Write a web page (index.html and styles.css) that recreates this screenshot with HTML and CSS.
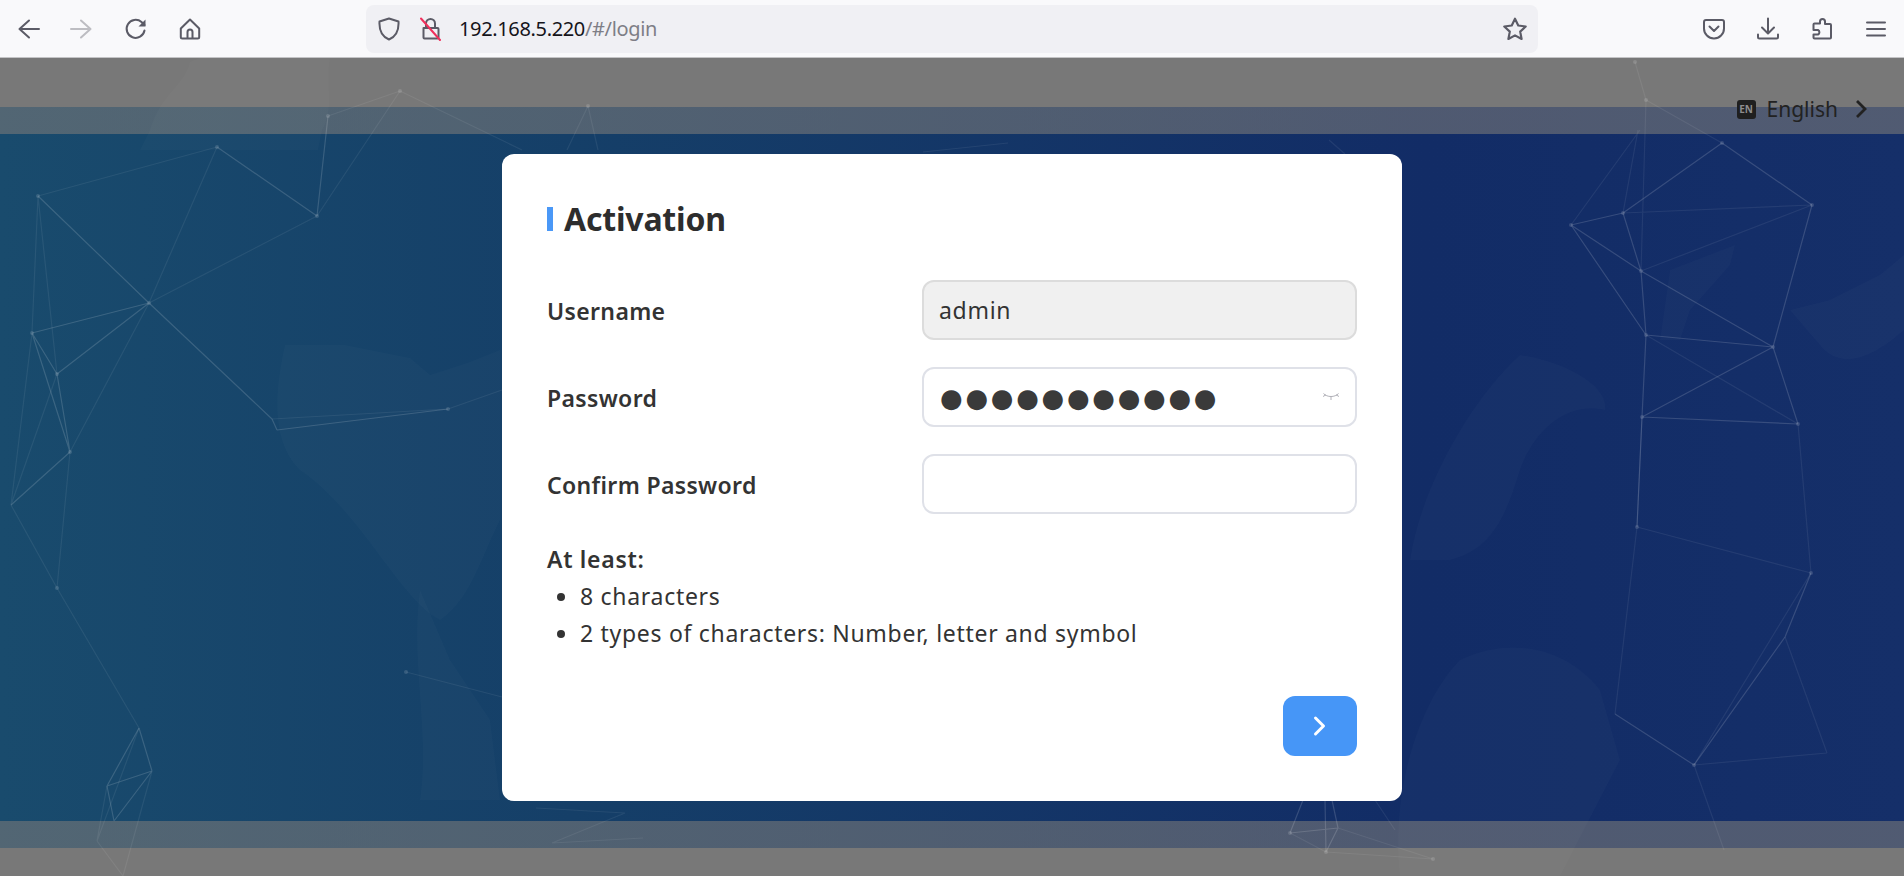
FILE: index.html
```html
<!DOCTYPE html>
<html lang="en">
  <head>
    <meta charset="UTF-8" />
    <meta name="viewport" content="width=device-width, initial-scale=1.0" />
    <title>Activation</title>
    <link rel="stylesheet" href="styles.css">
  </head>
  <body>
    <header class="toolbar">
      <div class="tool-group">
        <button class="tool-btn" aria-label="Back">
          <svg width="24" height="24" viewBox="0 0 24 24"><path d="M13 3.500 3.500 12l9.500 8.500M3.500 12H23"/></svg>
        </button>
        <button class="tool-btn tool-off" aria-label="Forward">
          <svg width="24" height="24" viewBox="0 0 24 24"><path d="M11 3.500 20.500 12 11 20.500M20.500 12H1"/></svg>
        </button>
        <button class="tool-btn" aria-label="Reload">
          <svg width="24" height="24" viewBox="0 0 24 24"><path d="M20.500 13.500A9 9 0 1 1 17.500 5L20.500 8"/><path class="fill" d="M21.500 2.500V9.500H14.500Z"/></svg>
        </button>
        <button class="tool-btn" aria-label="Home">
          <svg width="24" height="24" viewBox="0 0 24 24"><path d="M12 2.500 2.800 11.500V20a1.500 1.500 0 0 0 1.500 1.500h15.400a1.500 1.500 0 0 0 1.500-1.500v-8.500ZM9.500 21.500V15a2.500 2.500 0 0 1 5 0v6.500"/></svg>
        </button>
      </div>

      <div class="address-bar">
        <svg class="addr-icon" width="22" height="24" viewBox="0 0 22 24"><path d="M11 1.500 20.500 4.500C21 13 18 19.500 11 22.500 4 19.500 1 13 1.500 4.500Z"/></svg>
        <svg class="addr-icon lock" width="22" height="24" viewBox="0 0 22 24"><path d="M6 11V6.500a4.500 4.500 0 0 1 9 0V11M3.500 11h14a1 1 0 0 1 1 1v8.500a1 1 0 0 1-1 1h-13a1 1 0 0 1-1-1Z"/><path class="slash" d="M1 1.500 20 23"/></svg>
        <span class="url">192.168.5.220<span class="url-path">/#/login</span></span>
        <svg class="addr-icon star" width="26" height="26" viewBox="0 0 24 24"><path d="M12 2.500 15 8.800 21.900 9.700 16.800 14.400 18.100 21.200 12 17.900 5.900 21.200 7.200 14.400 2.100 9.700 9 8.800Z"/></svg>
      </div>

      <div class="tool-group tool-right">
        <button class="tool-btn" aria-label="Pocket">
          <svg width="24" height="24" viewBox="0 0 24 24"><path d="M4 3h16a2 2 0 0 1 2 2v6.500a10 10 0 0 1-20 0V5a2 2 0 0 1 2-2ZM7.500 9.500 12 14l4.500-4.500"/></svg>
        </button>
        <button class="tool-btn" aria-label="Downloads">
          <svg width="24" height="24" viewBox="0 0 24 24"><path d="M12 1.500V16M6 10.500 12 16.500 18 10.500M2 17.500V20a1.500 1.500 0 0 0 1.500 1.500h17A1.500 1.500 0 0 0 22 20v-2.500"/></svg>
        </button>
        <button class="tool-btn" aria-label="Extensions">
          <svg width="24" height="24" viewBox="0 0 24 24"><path d="M10 6.500H4.500a1 1 0 0 0-1 1V13H8a2.500 2.500 0 0 1 0 4.500H3.500v3a1 1 0 0 0 1 1H20a1 1 0 0 0 1-1V8a1 1 0 0 0-1-1h-5V4.500a2.500 2.500 0 0 0-5 0Z"/></svg>
        </button>
        <button class="tool-btn" aria-label="Menu">
          <svg width="24" height="24" viewBox="0 0 24 24"><path d="M3 5.500h18M3 12h18M3 18.500h18"/></svg>
        </button>
      </div>
    </header>

    <div class="stage">
      <!-- world map and network lines behind the card -->
      <svg class="backdrop" width="1904" height="818" viewBox="0 58 1904 818">
        <g class="map">
          <path d="M150 130C160 95 185 85 190 62L200 58H330C325 85 335 110 322 130L318 150H140Z"/>
          <path d="M285 345 345 345 410 358 430 375 470 362 500 350V520C480 560 470 600 440 620 400 600 360 510 300 470 270 440 275 390 285 345Z"/>
          <path d="M420 590 450 660 490 720 500 800H420C430 730 410 660 420 590Z"/>
          <path d="M1410 560C1420 490 1470 400 1520 355 1560 360 1610 385 1605 410 1560 400 1530 440 1520 470 1505 520 1490 550 1450 560Z"/>
          <path d="M1670 270 1735 245 1730 265 1690 310 1680 340 1660 340Z"/>
          <path d="M1790 310 1830 300 1880 275 1904 255V330C1870 360 1840 370 1820 345Z"/>
          <path d="M1460 660C1500 640 1560 640 1600 690L1620 760 1560 876H1400C1390 790 1420 700 1460 660Z"/>
        </g>
        <g class="links-faint">
          <path d="M38 196 217 147M217 147 149 303M149 303 317 216M38 196 32 333M38 196 57 374M32 333 11 505M57 374 11 505M149 303 70 452M70 452 57 588M272 419 448 409M448 409 502 390M400 91 522 150M328 116 400 91M317 216 400 91M11 505 57 588M57 588 139 728"/>
          <path d="M139 728 97 841M152 771 123 876M107 786 97 841M97 841 123 876M406 672 502 697M588 106 567 150M588 106 598 150"/>
          <path d="M1623 213 1812 205M1641 271 1812 205M1571 225 1640 130M1623 213 1638 130M1646 100 1641 271M1635 62 1646 100M1646 100 1722 143M1646 335 1798 424M1642 417 1637 527M1637 527 1811 573M1637 527 1615 714M1811 573 1694 765M1694 765 1724 850M1827 753 1694 765M1798 424 1811 573M1785 637 1827 753"/>
          <path d="M1375 800 1395 830M1290 833 1326 852M1338 828 1433 859M1326 852 1433 859M1008 143 923 152M1329 140 1345 154M536 808 625 813M625 813 552 843M552 843 643 838"/>
        </g>
        <g class="links">
          <path d="M38 196 149 303M32 333 149 303M32 333 57 374M57 374 149 303M57 374 70 452M32 333 70 452M70 452 11 505M149 303 272 419M217 147 317 216M317 216 328 116M272 419 277 430M277 430 448 409"/>
          <path d="M139 728 152 771M139 728 107 786M107 786 152 771M107 786 114 821M152 771 114 821"/>
          <path d="M1722 143 1812 205M1722 143 1623 213M1623 213 1571 225M1571 225 1641 271M1623 213 1641 271M1641 271 1646 335M1571 225 1646 335M1641 271 1773 347M1646 335 1773 347M1773 347 1812 205M1773 347 1798 424M1642 417 1773 347M1642 417 1798 424M1646 335 1642 417M1642 417 1637 527M1811 573 1785 637M1785 637 1694 765M1694 765 1615 714"/>
          <path d="M1303 800 1290 833M1325 800 1326 852M1332 800 1338 828M1290 833 1338 828M1338 828 1326 852"/>
        </g>
        <g class="nodes">
          <circle cx="38" cy="196" r="2"/><circle cx="149" cy="303" r="2"/><circle cx="32" cy="333" r="2"/><circle cx="57" cy="374" r="2"/><circle cx="70" cy="452" r="2"/><circle cx="217" cy="147" r="2"/><circle cx="317" cy="216" r="2"/><circle cx="328" cy="116" r="2"/><circle cx="400" cy="91" r="2"/><circle cx="448" cy="409" r="2"/><circle cx="588" cy="106" r="2"/><circle cx="57" cy="588" r="2"/><circle cx="406" cy="672" r="2"/><circle cx="1635" cy="62" r="2"/><circle cx="1646" cy="100" r="2"/><circle cx="1722" cy="143" r="2"/><circle cx="1812" cy="205" r="2"/><circle cx="1623" cy="213" r="2"/><circle cx="1571" cy="225" r="2"/><circle cx="1641" cy="271" r="2"/><circle cx="1646" cy="335" r="2"/><circle cx="1773" cy="347" r="2"/><circle cx="1642" cy="417" r="2"/><circle cx="1798" cy="424" r="2"/><circle cx="1637" cy="527" r="2"/><circle cx="1811" cy="573" r="2"/><circle cx="1694" cy="765" r="2"/><circle cx="1290" cy="833" r="2"/><circle cx="1326" cy="852" r="2"/><circle cx="1433" cy="859" r="2"/>
        </g>
      </svg>

      <div class="lang-row">
        <div class="lang">
          <span class="lang-badge">EN</span>
          <span>English</span>
          <svg width="12" height="20" viewBox="0 0 12 20"><path d="M2 2 10 10 2 18"/></svg>
        </div>
      </div>

      <main class="card">
        <h2 class="card-title">Activation</h2>

        <div class="form-row">
          <label for="username">Username</label>
          <div class="field">
            <input id="username" type="text" value="admin" disabled />
          </div>
        </div>
        <div class="form-row">
          <label for="password">Password</label>
          <div class="field">
            <input id="password" class="dots" type="text" value="●●●●●●●●●●●" />
            <svg class="eye" width="18" height="11" viewBox="0 0 18 11"><path d="M1.500 2.500C5 6.500 13 6.500 16.500 2.500M1 5.500 4 3.800M17 5.500 14 3.800M9 5.500V9"/></svg>
          </div>
        </div>
        <div class="form-row">
          <label for="confirm">Confirm Password</label>
          <div class="field">
            <input id="confirm" type="password" />
          </div>
        </div>

        <div class="rules">
          <p class="rules-head">At least:</p>
          <ul>
            <li>8 characters</li>
            <li>2 types of characters: Number, letter and symbol</li>
          </ul>
        </div>

        <div class="actions">
          <button class="next-btn" aria-label="Next">
            <svg width="14" height="22" viewBox="0 0 14 22"><path d="M2.500 3 10.500 11 2.500 19"/></svg>
          </button>
        </div>
      </main>
    </div>
  </body>
</html>
```

FILE: styles.css
```css
* {
  box-sizing: border-box;
  margin: 0;
  padding: 0;
}

html,
body {
  height: 100%;
  overflow: hidden;
}

body {
  font-family: "Noto Sans", "Open Sans", sans-serif;
  color: #333;
}

button {
  background: none;
  border: none;
  cursor: pointer;
}

/* browser bar */
.toolbar {
  display: flex;
  align-items: center;
  height: 58px;
  background: #f9f9fb;
  border-bottom: 1px solid #c4c4c6;
}

.tool-group {
  display: flex;
  flex-shrink: 0;
  padding-left: 1px;
}

.tool-right {
  margin-left: auto;
  padding: 0 1px 0 0;
}

.tool-btn {
  display: flex;
  align-items: center;
  justify-content: center;
  width: 54px;
  height: 54px;
}

.tool-btn svg,
.addr-icon {
  fill: none;
  stroke: #5b5b66;
  stroke-width: 2;
  stroke-linecap: round;
  stroke-linejoin: round;
  flex-shrink: 0;
}

.tool-btn .fill {
  fill: #5b5b66;
  stroke: none;
}

.tool-off svg {
  stroke: #bdbdc2;
}

.address-bar {
  display: flex;
  align-items: center;
  width: 1172px;
  height: 48px;
  margin-left: 149px;
  padding: 0 10px 0 12px;
  background: #f0f0f4;
  border-radius: 8px;
}

.lock {
  margin-left: 20px;
}

.lock .slash {
  stroke: #f0305c;
}

.url {
  margin-left: 17px;
  font-size: 20px;
  letter-spacing: -0.35px;
  color: #15141a;
}

.url-path {
  color: #7e7e86;
}

.star {
  margin-left: auto;
}

/* page background */
.stage {
  position: relative;
  height: 818px;
  background:
    linear-gradient(
      to bottom,
      #787878 0,
      #787878 49px,
      rgba(120, 120, 120, 0.6) 49px,
      rgba(120, 120, 120, 0.6) 76px,
      transparent 76px,
      transparent 763px,
      rgba(120, 120, 120, 0.6) 763px,
      rgba(120, 120, 120, 0.6) 790px,
      #787878 790px
    ),
    linear-gradient(to right, #194b6d 0%, #153f68 30%, #122c66 75%, #152f69 100%);
}

.backdrop {
  position: absolute;
  top: 0;
  left: 0;
}

.map path {
  fill: rgba(255, 255, 255, 0.018);
}

.links path,
.links-faint path {
  fill: none;
  stroke-width: 1.2;
}

.links path {
  stroke: rgba(255, 255, 255, 0.15);
}

.links-faint path {
  stroke: rgba(255, 255, 255, 0.07);
}

.nodes circle {
  fill: rgba(255, 255, 255, 0.14);
}

.lang-row {
  position: relative;
  display: flex;
  justify-content: flex-end;
  height: 96px;
  padding: 40px 37px 0 0;
}

.lang {
  display: flex;
  align-items: center;
  height: 22px;
  font-size: 21px;
  color: #222;
}

.lang svg {
  margin-left: 17px;
  fill: none;
  stroke: #222;
  stroke-width: 2.800;
}

.lang-badge {
  display: flex;
  align-items: center;
  justify-content: center;
  width: 19px;
  height: 19px;
  margin-right: 11px;
  background: #1f1f1f;
  border-radius: 3px;
  font-size: 10px;
  font-weight: 700;
  color: #8d8d8d;
}

/* activation card */
.card {
  position: relative;
  width: 900px;
  margin: 0 auto;
  padding: 45px 45px 45px;
  background: #fff;
  border-radius: 12px;
}

.card-title {
  height: 40px;
  margin-bottom: 41px;
  padding-left: 17px;
  font-size: 32px;
  font-weight: 700;
  line-height: 40px;
  letter-spacing: -0.2px;
  color: #2d2d2d;
  background: linear-gradient(#4a98f7, #4a98f7) no-repeat 0 8px / 6px 24px;
}

.form-row {
  display: flex;
  align-items: center;
  justify-content: space-between;
  margin-bottom: 27px;
}

.form-row label {
  padding-top: 1px;
  font-size: 23px;
  font-weight: 600;
  letter-spacing: 0.35px;
}

.field {
  position: relative;
  width: 435px;
}

.field input {
  display: block;
  width: 100%;
  height: 60px;
  padding: 0 15px;
  background: #fff;
  border: 2px solid #dfe1e8;
  border-radius: 12px;
  font-family: inherit;
  font-size: 23px;
  letter-spacing: 0.7px;
  color: #333;
  outline: none;
}

.field input:disabled {
  background: #f0f0f0;
  border-color: #dcdcdc;
}

.field .dots {
  padding: 2px 0 0 16px;
  font-family: "DejaVu Sans", sans-serif;
  font-size: 26px;
  letter-spacing: 2.700px;
  color: #3a3a3a;
}

.eye {
  position: absolute;
  top: 24px;
  right: 17px;
  fill: none;
  stroke: #a8a8b0;
  stroke-width: 0.900;
}

.rules {
  font-size: 23px;
  line-height: 37px;
  letter-spacing: 0.7px;
}

.rules-head {
  font-weight: 600;
}

.rules ul {
  padding-left: 33px;
}

.actions {
  display: flex;
  justify-content: flex-end;
  margin-top: 44px;
}

.next-btn {
  display: flex;
  align-items: center;
  justify-content: center;
  width: 74px;
  height: 60px;
  background: #4696f7;
  border-radius: 12px;
}

.next-btn svg {
  fill: none;
  stroke: #fff;
  stroke-width: 3;
  stroke-linecap: round;
  stroke-linejoin: round;
}
```
